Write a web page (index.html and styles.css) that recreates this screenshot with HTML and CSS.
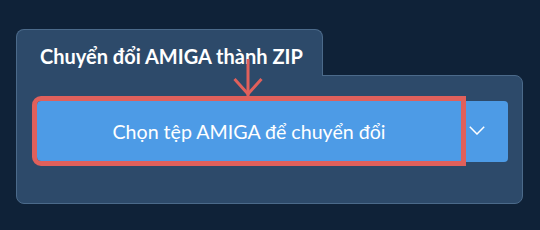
FILE: index.html
```html
<!DOCTYPE html>
<html>
<head>
<meta charset="utf-8">
<link rel="stylesheet" href="styles.css">
</head>
<body>
<div class="page">
  <div class="card">
    <div class="tab"><h2 class="title">Chuyển đổi AMIGA thành ZIP</h2></div>
    <div class="panel">
      <div class="btn-group">
        <button class="btn-main">Chọn tệp AMIGA để chuyển đổi</button>
        <button class="btn-drop">
          <svg width="16" height="9" viewBox="0 0 16 9"><polyline points="0.8,0.8 8,8 15.2,0.8" fill="none" stroke="#fff" stroke-width="1.5"/></svg>
        </button>
      </div>
    </div>
    <svg class="pointer" width="32" height="40" viewBox="0 0 32 40">
      <line x1="16" y1="0" x2="16" y2="37" stroke="#e0605b" stroke-width="3"/>
      <polyline points="2.5,20 16,35 29.5,20" fill="none" stroke="#e0605b" stroke-width="3"/>
    </svg>
  </div>
</div>
</body>
</html>
```

FILE: styles.css
```css
html, body {
  margin: 0;
  padding: 0;
}
body {
  background: #0f2238;
  width: 540px;
  height: 230px;
  overflow: hidden;
  font-family: Lato, "Noto Sans", sans-serif;
}
.page {
  padding: 29px 0 0 16px;
}
.card {
  position: relative;
  width: 507px;
}
.tab {
  position: relative;
  z-index: 1;
  width: 307px;
  height: 47px;
  box-sizing: border-box;
  background: #2d4a6a;
  border: 1px solid #4b6a8a;
  border-bottom: none;
  border-radius: 8px 8px 0 0;
  margin-bottom: -1px;
  padding: 14px 0 0 23px;
}
.title {
  margin: 0;
  font-size: 20px;
  font-weight: 700;
  color: #ffffff;
  line-height: 24px;
  white-space: nowrap;
}
.panel {
  background: #2d4a6a;
  border: 1px solid #4b6a8a;
  border-radius: 0 8px 8px 8px;
  padding: 25px 14px 41px 20px;
}
.btn-group {
  display: flex;
  height: 61px;
}
.btn-main {
  width: 424px;
  height: 60px;
  border: none;
  background: #4d9be6;
  color: #ffffff;
  font-family: Lato, "Noto Sans", sans-serif;
  font-size: 19.6px;
  font-weight: 400;
  border-radius: 4px 0 0 4px;
  outline: 5px solid #e0605b;
  position: relative;
  z-index: 1;
  padding: 0;
  margin: 0;
}
.btn-drop {
  flex: 1;
  height: 61px;
  border: none;
  margin: 0;
  background: #4d9be6;
  border-radius: 0 4px 4px 0;
  display: flex;
  align-items: center;
  padding: 0 0 0 8px;
}
.btn-drop svg {
  display: block;
  margin-top: -2px;
}
.pointer {
  position: absolute;
  left: 216px;
  top: 30px;
  z-index: 3;
}
```
